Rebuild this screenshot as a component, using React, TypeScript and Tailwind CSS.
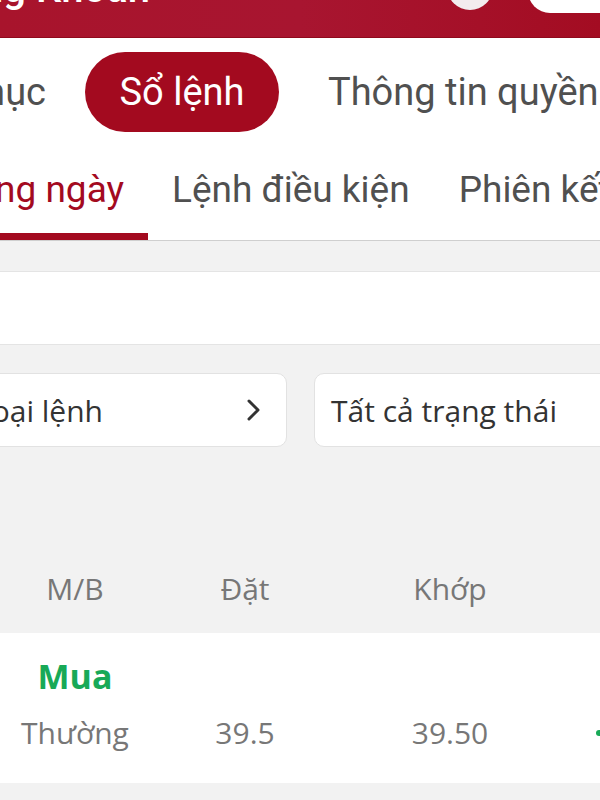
import React from 'react';

const roboto = { fontFamily: 'Roboto, "Noto Sans", sans-serif' };
const openSans = { fontFamily: '"Open Sans", "Noto Sans", sans-serif' };

function Clip({ width, children, className = '' }: { width: string; children: React.ReactNode; className?: string }) {
  // shows only the right end of a label that runs off the left edge
  return (
    <div className={`${width} shrink-0 overflow-hidden flex justify-end whitespace-nowrap ${className}`}>
      {children}
    </div>
  );
}

export default function App() {
  return (
    <div className="w-[600px] h-[800px] overflow-hidden bg-[#f2f2f2]">
      {/* Red header, scrolled mostly out of view */}
      <div className="h-[38px] overflow-hidden bg-gradient-to-r from-[#a8142c] via-[#a81530] to-[#a30c22] border-b border-[#8f0a1d] flex items-start">
        <Clip width="w-[150px]" className="-mt-[35px]">
          <span style={roboto} className="text-[40px] font-medium text-white leading-[48px]">Tổng Khoản</span>
        </Clip>
        <div className="flex-1" />
        <div className="w-[46px] h-[46px] -mt-[36px] rounded-full bg-[#f3ecee] shrink-0" />
        <div className="w-[35px] shrink-0" />
        <div className="w-[72px] h-[50px] -mt-[37px] rounded-l-[22px] bg-white shrink-0" />
      </div>

      {/* Top pill tabs */}
      <div style={roboto} className="bg-white h-[108px] flex items-center text-[38px] text-[#505050] whitespace-nowrap">
        <Clip width="w-[46px]"><span>Danh mục</span></Clip>
        <div className="ml-[39px] h-[80px] w-[194px] shrink-0 rounded-full bg-[#a30a1f] text-white flex items-center justify-center">
          Sổ lệnh
        </div>
        <span className="ml-[49px]">Thông tin quyền</span>
      </div>

      {/* Sub tabs */}
      <div style={roboto} className="bg-white h-[95px] flex items-stretch text-[37px] text-[#505050] whitespace-nowrap border-b border-[#cfcfcf]">
        <div className="w-[148px] shrink-0 flex flex-col">
          <div className="flex-1 flex items-center pr-[24px]">
            <Clip width="w-[124px]"><span className="text-[#a30a1f]">Lệnh trong ngày</span></Clip>
          </div>
          <div className="h-[7px] bg-[#a30a1f]" />
        </div>
        <div className="ml-[24px] flex items-center pb-[7px]">Lệnh điều kiện</div>
        <div className="ml-[49px] flex items-center pb-[7px]">Phiên kết</div>
      </div>

      <div className="h-[31px] bg-[#f2f2f2] border-b border-[#e4e4e4]" />
      <div className="h-[73px] bg-white border-b border-[#e4e4e4]" />

      {/* Filters */}
      <div style={openSans} className="pt-[28px] flex gap-[27px] text-[30px] text-[#333]">
        <div className="w-[307px] h-[74px] shrink-0 -ml-[20px] bg-white rounded-[10px] border border-[#e2e2e2] flex items-center justify-between pr-[24px]">
          <Clip width="w-[122px]"><span>Tất cả loại lệnh</span></Clip>
          <svg width="16" height="24" viewBox="0 0 16 24" fill="none" stroke="#333" strokeWidth="3" strokeLinecap="round" strokeLinejoin="round">
            <path d="M3 3l9 9-9 9" />
          </svg>
        </div>
        <div className="flex-1 h-[74px] -mr-[20px] bg-white rounded-[10px] border border-[#e2e2e2] flex items-center pl-[16px] whitespace-nowrap">
          Tất cả trạng thái
        </div>
      </div>

      {/* Table header */}
      <div style={openSans} className="mt-[119px] h-[67px] flex items-start text-[30px] text-[#777]">
        <div className="w-[150px] text-center">M/B</div>
        <div className="w-[190px] text-center">Đặt</div>
        <div className="w-[220px] text-center">Khớp</div>
      </div>

      {/* Order row */}
      <div style={openSans} className="h-[150px] bg-white pt-[21px]">
        <div className="flex">
          <div className="w-[150px] text-center text-[34px] leading-[44px] font-bold text-[#18a957]">Mua</div>
        </div>
        <div className="flex text-[30px] text-[#777] mt-[12px] items-center">
          <div className="w-[150px] text-center">Thường</div>
          <div className="w-[190px] text-center">39.5</div>
          <div className="w-[220px] text-center">39.50</div>
          <div className="flex-1 flex justify-end">
            <div className="w-[4px] h-[6px] rounded-l-full bg-[#18a957]" />
          </div>
        </div>
      </div>
    </div>
  );
}
